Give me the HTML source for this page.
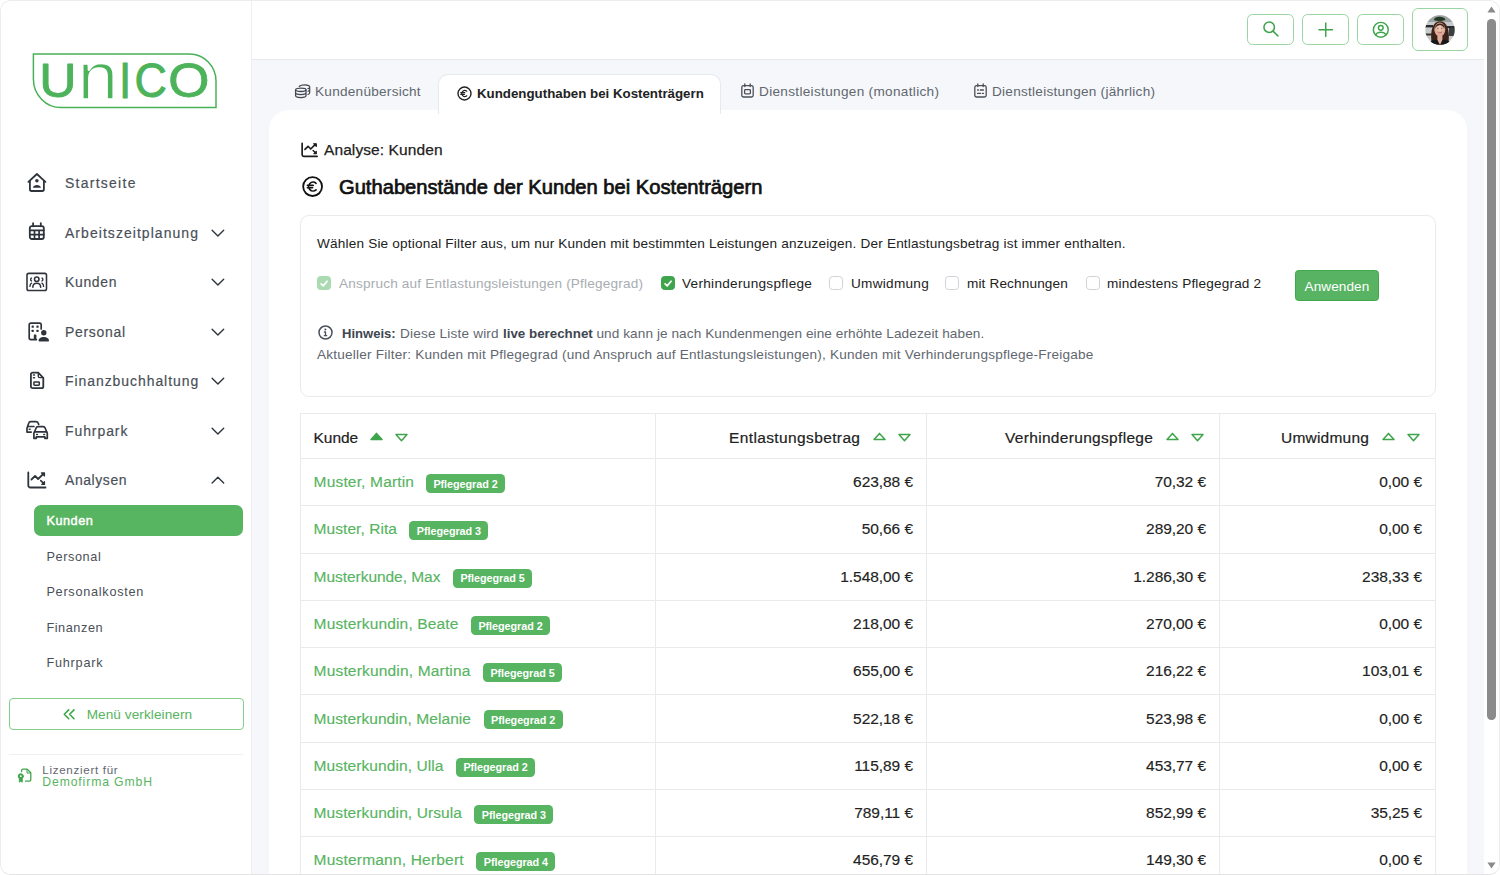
<!DOCTYPE html>
<html lang="de">
<head>
<meta charset="utf-8">
<title>UNICO – Guthabenstände der Kunden bei Kostenträgern</title>
<style>
*{box-sizing:border-box;margin:0;padding:0}
html,body{width:1500px;height:875px;overflow:hidden;background:#fff}
body{font-family:"Liberation Sans",sans-serif;color:#222;position:relative;-webkit-font-smoothing:antialiased}
#frame{position:absolute;left:0;top:0;width:1500px;height:875px;border-radius:10px;overflow:hidden;background:#f5f7fa}
#frameb{position:absolute;left:0;top:0;width:1500px;height:875px;border:1px solid #ececec;border-bottom:1.500px solid #e3e3e3;border-radius:10px;pointer-events:none;z-index:50}
.abs{position:absolute}
svg{display:block;overflow:visible}
/* ---------- sidebar ---------- */
#side{position:absolute;left:0;top:0;width:252.400px;height:875px;background:#fff;border-right:1.400px solid #edeff2}
.mi{position:absolute;left:65px;font-size:15.500px;letter-spacing:1px;color:#4a4f57;line-height:20px;white-space:nowrap;transform:scaleX(.9);transform-origin:0 50%}
.mic{position:absolute;left:27px}
.chev{position:absolute;left:210px}
.sub{position:absolute;left:46.400px;font-size:12.700px;letter-spacing:.8px;color:#4a4f57;line-height:18px;white-space:nowrap}
#act{position:absolute;left:34px;top:505px;width:209px;height:30.5px;background:#57b461;border-radius:7px}
#shrink{position:absolute;left:9px;top:698px;width:234.500px;height:31.500px;border:1px solid #84ce8e;border-radius:4px;background:#fff}
#shrink span{position:absolute;left:76.700px;top:6.800px;font-size:13.600px;line-height:18px;color:#57b461;letter-spacing:.35px;white-space:nowrap}
/* ---------- top bar ---------- */
#top{position:absolute;left:252px;top:0;width:1232px;height:60px;background:#fff;border-bottom:1px solid #e6e9ee}
.tb{position:absolute;top:14px;width:47px;height:31px;border:1.300px solid #9ad6a3;border-radius:5.500px;background:#fff}
/* ---------- scrollbar ---------- */
#sb{position:absolute;left:1484px;top:0;width:16px;height:875px;background:#fff}
/* ---------- tabs ---------- */
.tab{position:absolute;top:83px;font-size:13.600px;line-height:18px;color:#62676f;white-space:nowrap;letter-spacing:.1px}
#tabact{position:absolute;left:438.300px;top:74px;width:283.200px;height:40px;background:#fff;border:1px solid #e6e9ee;border-bottom:none;border-radius:10px 10px 0 0}
/* ---------- card ---------- */
#card{position:absolute;left:269px;top:110px;width:1198px;height:800px;background:#fff;border-radius:20px 20px 0 0}
#fbox{position:absolute;left:300px;top:215px;width:1136px;height:182px;border:1px solid #e8eaee;border-radius:9px;background:#fff}
.t14{position:absolute;font-size:13.600px;line-height:18px;white-space:nowrap;color:#222}
.cb{position:absolute;top:276px;width:14px;height:14px;border:1px solid #cfd3d8;border-radius:3.5px;background:#fff}
.cb.on{background:#3fa54c;border-color:#3fa54c}
.cb.dis{background:#a9dab0;border-color:#a9dab0}
#apply{position:absolute;left:1295px;top:270px;width:84px;height:31px;background:#58b463;border:1px solid #3fa84c;border-radius:3.500px;color:#fff;font-size:13.600px;line-height:29px;text-align:center;letter-spacing:.2px;padding-top:1px}
/* ---------- table ---------- */
#tbl{position:absolute;left:299.600px;top:413px;width:1136.900px;height:470px;border:1px solid #e8eaee;border-bottom:none;background:#fff}
.vl{position:absolute;top:413px;width:1px;height:470px;background:#e8eaee}
.hl{position:absolute;left:300px;width:1136px;height:1px;background:#e8eaee}
.th{position:absolute;top:428.300px;font-size:15.500px;line-height:20px;color:#222;white-space:nowrap}
.nm{position:absolute;left:313.600px;font-size:15.500px;line-height:20px;color:#57b461;white-space:nowrap}
.bd{position:absolute;height:19px;background:#57b461;border-radius:4.500px;color:#fff;font-weight:bold;font-size:10.800px;line-height:19px;padding:.800px 0 0 0;white-space:nowrap;letter-spacing:-.05px;width:79px;text-align:center}
.num{position:absolute;letter-spacing:-.05px;font-size:15.500px;line-height:20px;color:#222;white-space:nowrap;text-align:right;width:200px}
/*CAL*/
#m1{letter-spacing:1.415px!important}
#m2{letter-spacing:1.184px!important}
#m3{letter-spacing:0.754px!important}
#m4{letter-spacing:0.783px!important}
#m5{letter-spacing:1.063px!important}
#m6{letter-spacing:1.043px!important}
#m7{letter-spacing:0.653px!important}
#s1{letter-spacing:0.530px!important}
#s2{letter-spacing:0.617px!important}
#s3{letter-spacing:0.733px!important}
#s4{letter-spacing:0.571px!important}
#s5{letter-spacing:0.774px!important}
#shr{letter-spacing:0.075px!important}
#lic1{letter-spacing:0.694px!important}
#lic2{letter-spacing:0.884px!important}
#tab1{letter-spacing:0.255px!important}
#tab2{transform:scaleX(0.9782)}
#tab3{letter-spacing:0.314px!important}
#tab4{letter-spacing:0.254px!important}
#an{letter-spacing:0.093px!important}
#h1{transform:scaleX(1.0073)}
#f1{letter-spacing:0.182px!important}
#h2b{letter-spacing:0.182px!important}
#c1{letter-spacing:0.185px!important}
#c2{letter-spacing:0.288px!important}
#c3{letter-spacing:0.269px!important}
#c4{letter-spacing:0.138px!important}
#c5{letter-spacing:0.169px!important}
#apply{letter-spacing:0.064px!important}
#hb1{transform:scaleX(0.9587);margin-right:-2.31px}
#hb2{transform:scaleX(0.9823);margin-right:-1.62px}
#h2c{letter-spacing:0.080px!important}
#h3{letter-spacing:0.210px!important}
#n1{letter-spacing:0.169px!important}
#n2{letter-spacing:0.063px!important}
#n3{letter-spacing:-0.047px!important}
#n4{letter-spacing:0.146px!important}
#n5{letter-spacing:0.173px!important}
#n6{letter-spacing:0.072px!important}
#n7{letter-spacing:0.085px!important}
#n8{letter-spacing:0.102px!important}
#n9{letter-spacing:0.197px!important}
#th1{letter-spacing:-0.082px!important}
#th2{letter-spacing:0.378px!important}
#th3{letter-spacing:0.316px!important}
#th4{letter-spacing:0.220px!important}
/*ENDCAL*/
#hb1,#hb2{color:#40464f;display:inline-block;transform-origin:0 50%}
#an{-webkit-text-stroke:.25px #222}
.mi{-webkit-text-stroke:.2px #4a4f57}
.th{-webkit-text-stroke:.2px #222}
.num{-webkit-text-stroke:.15px #222}
.nm{-webkit-text-stroke:.15px #57b461}
</style>
</head>
<body>
<div id="frame">

<!-- SIDEBAR -->
<div id="side">
<!-- logo -->
<svg class="abs" style="left:0;top:0" width="251" height="130" viewBox="0 0 251 130">
  <path d="M33.400 54 H189.500 A26.500 27 0 0 1 216 81 V107.600 H61 A27.600 28.500 0 0 1 33.400 79 Z" fill="none" stroke="#48b055" stroke-width="1.500"/>
  <g fill="#4db35a" stroke="#4db35a" stroke-width=".9" stroke-linejoin="round" font-family="'Liberation Sans',sans-serif">
    <text transform="translate(39.27 97.21) scale(1.0625 1)" font-size="48.57">U</text>
    <text transform="translate(77.38 98.60) scale(1.1026 1)" font-size="66.30" stroke="#fff" stroke-width="1.71">n</text>
    <text transform="translate(119.04 97.70) scale(0.8929 1)" font-size="49.28">I</text>
    <text transform="translate(134.45 97.22) scale(0.9380 1)" font-size="47.89">C</text>
    <text transform="translate(168.35 97.22) scale(1.1055 1)" font-size="47.89">O</text>
  </g>
</svg>

<!-- menu icons -->
<svg class="mic" style="top:172px;left:27px" width="20" height="21" viewBox="0 0 20 21" fill="none" stroke="#2e343c" stroke-width="1.800" stroke-linecap="round" stroke-linejoin="round">
  <path d="M1.400 9.900 L9.900 2 L18.400 9.900"/><path d="M2.900 8.800 V17.300 a1.700 1.700 0 0 0 1.700 1.700 H15.200 a1.700 1.700 0 0 0 1.700 -1.700 V8.800"/>
  <circle cx="9.900" cy="8.700" r="1.750" fill="#2e343c" stroke="none"/><path d="M5.900 15.700 c.400 -3.500 7.600 -3.500 8 0 z" fill="#2e343c" stroke="none"/>
</svg>
<svg class="mic" style="top:222px;left:28px" width="18" height="19" viewBox="0 0 18 19" fill="none" stroke="#2e343c" stroke-width="1.800" stroke-linecap="round" stroke-linejoin="round">
  <rect x="1.800" y="4.100" width="14" height="12.900" rx="2"/><path d="M5.100 1.200 V4.300 M12.800 1.200 V4.300"/><path d="M1.800 8.300 H15.800 M1.800 12.700 H15.800 M6.500 8.300 V17 M11.100 8.300 V17" stroke-width="1.700"/>
</svg>
<svg class="mic" style="top:271.500px;left:26px" width="21.500" height="19.500" viewBox="0 0 22 20" fill="none" stroke="#2e343c" stroke-width="1.6" stroke-linecap="round" stroke-linejoin="round">
  <rect x="1" y="1.4" width="20" height="17.600" rx="1.8"/>
  <circle cx="11" cy="7.400" r="2.300"/><path d="M7 15.600 c0-5.400 8-5.400 8 0"/>
  <path d="M5.600 6.200 a1.700 1.700 0 0 0 0 3 M4 14.800 c0-1.700 .6-2.800 1.700-3.300 M16.400 6.200 a1.700 1.700 0 0 1 0 3 M18 14.800 c0-1.700 -.6-2.800 -1.700-3.300" stroke-width="1.400"/>
</svg>
<svg class="mic" style="top:321.500px;left:27.500px" width="22" height="20" viewBox="0 0 22 20" fill="none" stroke="#2e343c" stroke-width="1.7" stroke-linecap="round" stroke-linejoin="round">
  <path d="M8.400 17.600 H2.800 A1.600 1.600 0 0 1 1.200 16 V2.800 A1.600 1.600 0 0 1 2.800 1.200 H11.600 A1.600 1.600 0 0 1 13.200 2.800 V7"/>
  <g fill="#2e343c" stroke="none"><rect x="3.600" y="3.600" width="2.200" height="2.200" rx=".4"/><rect x="8.400" y="3.600" width="2.200" height="2.200" rx=".4"/><rect x="3.600" y="7.800" width="2.200" height="2.200" rx=".4"/><rect x="8.400" y="7.800" width="2.200" height="2.200" rx=".4"/><rect x="5.800" y="12.600" width="2.600" height="5" rx=".4"/>
  <circle cx="15.800" cy="10.800" r="2.700"/><path d="M10.600 18.800 c0-5 10.400-5 10.400 0 a.8 .8 0 0 1 -.8 .8 h-8.800 a.8 .8 0 0 1 -.8 -.8z"/></g>
</svg>
<svg class="mic" style="top:371px;left:29px" width="17" height="20" viewBox="0 0 17 20" fill="none" stroke="#2e343c" stroke-width="1.800" stroke-linecap="round" stroke-linejoin="round">
  <path d="M3.700 1.700 H9.200 L14.300 6.800 V15.400 a1.800 1.800 0 0 1 -1.800 1.800 H3.700 a1.800 1.800 0 0 1 -1.800 -1.800 V3.500 a1.800 1.800 0 0 1 1.800 -1.800 Z"/>
  <path d="M9.300 2.200 V5.300 a1.300 1.300 0 0 0 1.300 1.300 H13.800" stroke-width="1.400"/>
  <path d="M4.500 4.100 h1 M4.500 6.700 h1" stroke-width="1.500"/><rect x="4.900" y="10.900" width="5.400" height="3.300" rx=".7" stroke-width="1.500"/>
</svg>
<svg class="mic" style="top:420px;left:25px" width="24" height="21" viewBox="0 0 24 21" fill="none" stroke="#2e343c" stroke-width="1.700" stroke-linecap="round" stroke-linejoin="round">
  <path d="M2 12.100 V8.200 L3.600 3.400 A2.400 2.400 0 0 1 5.900 1.700 H11 A2.400 2.400 0 0 1 13.200 3.200 L13.700 4.400 M2 12.100 H6.200"/><path d="M3 6.400 H9" stroke-width="1.500"/><path d="M4.300 9.300 h.8" stroke-width="1.600"/>
  <path d="M9.600 11.800 L11.200 7.800 A1.900 1.900 0 0 1 13 6.600 H18.200 A1.900 1.900 0 0 1 20 7.800 L21.600 11.800"/>
  <path d="M10.300 11.800 H20.900 a1.400 1.400 0 0 1 1.400 1.400 V18.300 H19.900 V16.900 H11.300 V18.300 H8.900 V13.200 a1.400 1.400 0 0 1 1.400 -1.400 Z"/>
  <path d="M11.700 14.400 h.7 M18.800 14.400 h.7" stroke-width="1.500"/>
</svg>
<svg class="mic" style="top:470.700px;left:27px" width="20" height="18" viewBox="0 0 20 18" fill="none" stroke="#2e343c" stroke-width="1.800" stroke-linecap="round" stroke-linejoin="round">
  <path d="M1.300 1.500 V14.400 a2.100 2.100 0 0 0 2.100 2.100 H18.500"/><path d="M4.500 8.500 L8.100 4.900 L11.100 8 L16.400 2.800"/>
  <path d="M14.400 1.900 H17.500 V5 Z" fill="#2e343c" stroke-width="1.200"/><path d="M13.800 9.600 L16.600 12.400" stroke-width="1.600"/><path d="M17.500 10.700 V13.400 H14.800 Z" fill="#2e343c" stroke-width="1.200"/>
</svg>

<!-- menu labels -->
<div class="mi" id="m1" style="top:173.2px">Startseite</div>
<div class="mi" id="m2" style="top:222.7px">Arbeitszeitplanung</div>
<div class="mi" id="m3" style="top:272.2px">Kunden</div>
<div class="mi" id="m4" style="top:321.7px">Personal</div>
<div class="mi" id="m5" style="top:371.2px">Finanzbuchhaltung</div>
<div class="mi" id="m6" style="top:420.7px">Fuhrpark</div>
<div class="mi" id="m7" style="top:470.2px">Analysen</div>

<!-- chevrons -->
<svg class="chev" style="top:228.6px;left:210.600px" width="13.800" height="8.300" viewBox="0 0 15 9" fill="none" stroke="#2e343c" stroke-width="1.500" stroke-linecap="round" stroke-linejoin="round"><path d="M1.200 1.400 L7.500 7.600 L13.800 1.400"/></svg>
<svg class="chev" style="top:278.1px;left:210.600px" width="13.800" height="8.300" viewBox="0 0 15 9" fill="none" stroke="#2e343c" stroke-width="1.500" stroke-linecap="round" stroke-linejoin="round"><path d="M1.200 1.400 L7.500 7.600 L13.800 1.400"/></svg>
<svg class="chev" style="top:327.6px;left:210.600px" width="13.800" height="8.300" viewBox="0 0 15 9" fill="none" stroke="#2e343c" stroke-width="1.500" stroke-linecap="round" stroke-linejoin="round"><path d="M1.200 1.400 L7.500 7.600 L13.800 1.400"/></svg>
<svg class="chev" style="top:377.1px;left:210.600px" width="13.800" height="8.300" viewBox="0 0 15 9" fill="none" stroke="#2e343c" stroke-width="1.500" stroke-linecap="round" stroke-linejoin="round"><path d="M1.200 1.400 L7.500 7.600 L13.800 1.400"/></svg>
<svg class="chev" style="top:426.6px;left:210.600px" width="13.800" height="8.300" viewBox="0 0 15 9" fill="none" stroke="#2e343c" stroke-width="1.500" stroke-linecap="round" stroke-linejoin="round"><path d="M1.200 1.400 L7.500 7.600 L13.800 1.400"/></svg>
<svg class="chev" style="top:476.1px;left:210.600px" width="13.800" height="8.300" viewBox="0 0 15 9" fill="none" stroke="#2e343c" stroke-width="1.500" stroke-linecap="round" stroke-linejoin="round"><path d="M1.200 7.600 L7.500 1.400 L13.800 7.600"/></svg>

<!-- submenu -->
<div id="act"></div>
<div class="sub" id="s1" style="top:512px;color:#fff;-webkit-text-stroke:.45px #fff">Kunden</div>
<div class="sub" id="s2" style="top:547.6px">Personal</div>
<div class="sub" id="s3" style="top:583.1px">Personalkosten</div>
<div class="sub" id="s4" style="top:618.6px">Finanzen</div>
<div class="sub" id="s5" style="top:654.1px">Fuhrpark</div>

<!-- shrink button -->
<div id="shrink">
  <svg class="abs" style="left:53px;top:10px" width="12.500" height="10.600" viewBox="0 0 14 12" fill="none" stroke="#3aa648" stroke-width="1.800" stroke-linecap="round" stroke-linejoin="round"><path d="M6.400 1 L1.400 6 L6.400 11 M12.400 1 L7.400 6 L12.400 11"/></svg>
  <span id="shr">Menü verkleinern</span>
</div>

<div class="abs" style="left:9px;top:754px;width:234px;height:1px;background:#eef0f3"></div>
<svg class="abs" style="left:17px;top:767.500px" width="15" height="15" viewBox="0 0 15 15" fill="none" stroke="#3fa54c" stroke-width="1.300" stroke-linecap="round" stroke-linejoin="round">
  <path d="M4.600 3.600 V2.600 a1.400 1.400 0 0 1 1.400 -1.400 H10.200 L13.800 4.800 V11.800 a1.400 1.400 0 0 1 -1.400 1.400 H8.600"/><path d="M10 1.400 V5 H13.600" stroke-width="1"/>
  <circle cx="3.800" cy="8.200" r="2.500" fill="#3fa54c" stroke-width="1"/><circle cx="3.800" cy="8.200" r=".9" fill="#fff" stroke="none"/>
  <path d="M2.300 10.400 V14.200 L3.800 13.200 L5.300 14.200 V10.400 Z" fill="#3fa54c" stroke-width=".8"/>
</svg>
<div class="abs" style="left:42.300px;top:762.700px;font-size:11.600px;line-height:14px;color:#62676f;letter-spacing:.9px;white-space:nowrap" id="lic1">Lizenziert für</div>
<div class="abs" style="left:42.300px;top:774.300px;font-size:12.200px;line-height:16px;color:#57b461;letter-spacing:1px;white-space:nowrap" id="lic2">Demofirma GmbH</div>
</div>

<!-- TOP BAR -->
<div id="top">
  <div class="tb" style="left:995.400px">
    <svg class="abs" style="left:13.200px;top:5.300px" width="17.500" height="17.500" viewBox="0 0 18 18" fill="none" stroke="#3fa54c" stroke-width="1.600" stroke-linecap="round"><circle cx="7.400" cy="7.400" r="5.400"/><path d="M11.400 11.400 L16.400 16.400"/></svg>
  </div>
  <div class="tb" style="left:1050.400px">
    <svg class="abs" style="left:14.900px;top:6.900px" width="15.500" height="15.500" viewBox="0 0 16 16" fill="none" stroke="#3fa54c" stroke-width="1.500" stroke-linecap="round"><path d="M8 1 V15 M1 8 H15"/></svg>
  </div>
  <div class="tb" style="left:1105.300px">
    <svg class="abs" style="left:13.800px;top:5.800px" width="17.600" height="17.600" viewBox="0 0 18 18" fill="none" stroke="#3fa54c" stroke-width="1.500" stroke-linecap="round"><circle cx="9" cy="9" r="7.600"/><circle cx="9" cy="7" r="2.400"/><path d="M4 14.600 c.6-4 9.400-4 10 0"/></svg>
  </div>
  <div class="tb" style="left:1160px;top:8px;width:56px;height:43px;border-radius:6px">
    <svg class="abs" style="left:12.200px;top:5.600px" width="30" height="30" viewBox="0 0 30 30">
      <defs><clipPath id="avc"><circle cx="15" cy="15" r="14.700"/></clipPath>
      <radialGradient id="avf" cx=".5" cy=".4" r=".65"><stop offset="0" stop-color="#f0c9b8"/><stop offset="1" stop-color="#d49c88"/></radialGradient></defs>
      <g clip-path="url(#avc)">
        <rect width="30" height="30" fill="#c6cacb"/>
        <rect x="0" y="0" width="30" height="7" fill="#9da3a3"/>
        <rect x="0" y="10" width="8" height="2.400" fill="#2a2a2a"/><rect x="0" y="18.500" width="7" height="2" fill="#3a3a3a"/>
        <rect x="22" y="11" width="8" height="2.200" fill="#2d2d2d"/><rect x="24" y="13" width="6" height="8" fill="#3c3f40"/>
        <path d="M9 5 C9 1 19 .5 20.500 4.500 C18 6.500 11.500 6.500 9 5Z" fill="#243a22"/>
        <path d="M6.500 27 C5 15 8 6.200 15 6.200 C22 6.200 25 15 23.500 27 L21 30 H9 Z" fill="#3d2219"/>
        <ellipse cx="14.800" cy="14.600" rx="5.500" ry="7" fill="url(#avf)"/>
        <path d="M9.800 13.500 C10.500 9.500 13 8.400 15 8.400 C17.500 8.400 19.500 10 19.800 13.500 C18 11.500 16.500 10.200 14.800 10 C12.800 10.300 11 11.500 9.800 13.500Z" fill="#3d2219"/>
        <path d="M12.400 20.500 h5 v9 h-5z" fill="#dfae9b"/>
        <path d="M3 30 C5 25 9.500 24 12.400 25 L15 30 Z M27 30 C25 25 20.500 24 17.400 25 L15 30 Z" fill="#17171a"/>
        <path d="M12.800 17 q2.100 1.700 4.200 0" stroke="#b5545a" stroke-width=".9" fill="#f6e6e0"/>
        <circle cx="12.900" cy="13.300" r=".55" fill="#3a2a25"/><circle cx="16.800" cy="13.300" r=".55" fill="#3a2a25"/>
      </g>
    </svg>
  </div>
</div>

<!-- SCROLLBAR -->
<div id="sb">
  <svg class="abs" style="left:3px;top:5.600px" width="9" height="7" viewBox="0 0 9 7"><path d="M4.500 .6 L8.600 6.400 H.4 Z" fill="#8a8a8a"/></svg>
  <div class="abs" style="left:3.400px;top:18.800px;width:8.300px;height:701.500px;border-radius:4.200px;background:#8b8b8b"></div>
  <svg class="abs" style="left:3px;top:862px" width="9" height="7" viewBox="0 0 9 7"><path d="M4.500 6.400 L8.600 .6 H.4 Z" fill="#8a8a8a"/></svg>
</div>

<!-- TABS + CARD -->
<div id="card"></div>
<div id="tabact"></div>
<!-- tab icons -->
<svg class="abs" style="left:294px;top:83px" width="17" height="17" viewBox="0 0 17 17" fill="none" stroke="#42474e" stroke-width="1.300" stroke-linecap="round" stroke-linejoin="round">
  <ellipse cx="6.800" cy="6.800" rx="5.200" ry="1.700"/><path d="M1.600 6.800 V12.800 M12 6.800 V12.800 M1.600 9.800 c0 2.300 10.400 2.300 10.400 0 M1.600 12.800 c0 2.300 10.400 2.300 10.400 0"/>
  <path transform="translate(0 .8)" d="M5.300 2.500 C6.500 1.400 8.500 1 10.500 1 C13.400 1 15.700 1.900 15.700 3.200 V8.600 C15.700 9.600 15 10.300 14 10.700 M15.700 3.400 C15.700 4.100 14.900 4.500 14 4.800 M15.700 6 c0 .700 -.800 1.100 -1.700 1.400" stroke-width="1.200"/>
</svg>
<div class="tab" id="tab1" style="left:315px">Kundenübersicht</div>
<svg class="abs" style="left:457px;top:86px" width="15" height="15" viewBox="0 0 15 15" fill="none" stroke="#222" stroke-width="1.400" stroke-linecap="round"><circle cx="7.500" cy="7.500" r="6.500"/><path d="M9.800 5.200 a3 3 0 1 0 0 4.600 M3.800 6.700 H7.800 M3.800 8.400 H7.400" stroke-width="1.200"/></svg>
<div class="tab" id="tab2" style="left:477px;top:85px;transform-origin:0 50%;color:#222;font-weight:bold;letter-spacing:0">Kundenguthaben bei Kostenträgern</div>
<svg class="abs" style="left:741px;top:83px" width="13" height="15" viewBox="0 0 13 15" fill="none" stroke="#4a4f57" stroke-width="1.300" stroke-linecap="round" stroke-linejoin="round"><rect x=".8" y="2.600" width="11.400" height="11.400" rx="1.800"/><path d="M3.800 .8 V3.600 M9.200 .8 V3.600"/><rect x="3.600" y="6.600" width="5.800" height="4.200" rx=".8"/></svg>
<div class="tab" id="tab3" style="left:759px">Dienstleistungen (monatlich)</div>
<svg class="abs" style="left:974px;top:83px" width="13" height="15" viewBox="0 0 13 15" fill="none" stroke="#4a4f57" stroke-width="1.300" stroke-linecap="round" stroke-linejoin="round"><rect x=".8" y="2.600" width="11.400" height="11.400" rx="1.800"/><path d="M3.800 .8 V3.600 M9.200 .8 V3.600"/><path d="M3.600 7 H4.400 M6.400 7 H9.400 M3.600 10.400 H6.600 M8.600 10.400 H9.400" stroke-width="1.400"/></svg>
<div class="tab" id="tab4" style="left:992px">Dienstleistungen (jährlich)</div>

<!-- headings -->
<svg class="abs" style="left:301px;top:141.500px" width="17.500" height="15.750" viewBox="0 0 20 18" fill="none" stroke="#1c1c1c" stroke-width="1.900" stroke-linecap="round" stroke-linejoin="round">
  <path d="M1.300 1.500 V14.400 a2.100 2.100 0 0 0 2.100 2.100 H18.500"/><path d="M4.500 8.500 L8.100 4.900 L11.100 8 L16.400 2.800"/>
  <path d="M14.400 1.900 H17.500 V5 Z" fill="#1c1c1c" stroke-width="1.200"/><path d="M13.800 9.600 L16.600 12.400" stroke-width="1.600"/><path d="M17.500 10.700 V13.400 H14.800 Z" fill="#1c1c1c" stroke-width="1.200"/>
</svg>
<div class="abs" style="left:324px;top:140.100px;font-size:15.500px;line-height:20px;color:#222;white-space:nowrap" id="an">Analyse: Kunden</div>
<svg class="abs" style="left:302.200px;top:175.800px" width="21.200" height="21.200" viewBox="0 0 22 22" fill="none" stroke="#111" stroke-width="1.900" stroke-linecap="round"><circle cx="11" cy="11" r="9.800"/><path d="M14.600 7.600 a4.600 4.600 0 1 0 0 6.800 M5.600 9.800 H11.600 M5.600 12.200 H11" stroke-width="1.700"/></svg>
<div class="abs" id="h1" style="left:339px;top:174.600px;transform-origin:0 50%;font-size:20px;line-height:24px;color:#111;-webkit-text-stroke:.7px #111;white-space:nowrap">Guthabenstände der Kunden bei Kostenträgern</div>

<!-- FILTER BOX -->
<div id="fbox"></div>
<div class="t14" id="f1" style="left:317px;top:234.6px">Wählen Sie optional Filter aus, um nur Kunden mit bestimmten Leistungen anzuzeigen. Der Entlastungsbetrag ist immer enthalten.</div>
<div class="cb dis" style="left:317px"><svg class="abs" style="left:2px;top:2.500px" width="8.200" height="7.300" viewBox="0 0 9 8" fill="none" stroke="#fff" stroke-width="1.900" stroke-linecap="round" stroke-linejoin="round"><path d="M1.200 4.200 L3.500 6.400 L7.800 1.400"/></svg></div>
<div class="t14" id="c1" style="left:339px;top:274.6px;color:#a9adb2">Anspruch auf Entlastungsleistungen (Pflegegrad)</div>
<div class="cb on" style="left:661px"><svg class="abs" style="left:2px;top:2.500px" width="8.200" height="7.300" viewBox="0 0 9 8" fill="none" stroke="#fff" stroke-width="1.900" stroke-linecap="round" stroke-linejoin="round"><path d="M1.200 4.200 L3.500 6.400 L7.800 1.400"/></svg></div>
<div class="t14" id="c2" style="left:682px;top:274.6px">Verhinderungspflege</div>
<div class="cb" style="left:829px"></div>
<div class="t14" id="c3" style="left:851px;top:274.6px">Umwidmung</div>
<div class="cb" style="left:945px"></div>
<div class="t14" id="c4" style="left:967px;top:274.6px">mit Rechnungen</div>
<div class="cb" style="left:1086px"></div>
<div class="t14" id="c5" style="left:1107px;top:274.6px">mindestens Pflegegrad 2</div>
<div id="apply">Anwenden</div>
<svg class="abs" style="left:318.400px;top:325.400px" width="15" height="15" viewBox="0 0 15 15" fill="none" stroke="#4a515a" stroke-width="1.500" stroke-linecap="round"><circle cx="7.500" cy="7.500" r="6.500"/><path d="M7.500 7 V10.600 M6.400 7 H7.500 M6.300 10.700 H8.700" stroke-width="1.300"/><circle cx="7.400" cy="4.600" r="1" fill="#4a515a" stroke="none"/></svg>
<div class="t14" id="h2" style="left:342.400px;top:324.6px;color:#62676f"><b id="hb1">Hinweis:</b><span id="h2b"> Diese Liste wird </span><b id="hb2">live berechnet</b><span id="h2c"> und kann je nach Kundenmengen eine erhöhte Ladezeit haben.</span></div>
<div class="t14" id="h3" style="left:317px;top:345.6px;color:#62676f">Aktueller Filter: Kunden mit Pflegegrad (und Anspruch auf Entlastungsleistungen), Kunden mit Verhinderungspflege-Freigabe</div>

<!-- TABLE -->
<div id="tbl"></div>
<div class="vl" style="left:655px"></div><div class="vl" style="left:926px"></div><div class="vl" style="left:1219px"></div>
<div class="hl" style="top:458.0px"></div><div class="hl" style="top:505.3px"></div><div class="hl" style="top:552.5px"></div><div class="hl" style="top:599.8px"></div><div class="hl" style="top:647.0px"></div><div class="hl" style="top:694.3px"></div><div class="hl" style="top:741.6px"></div><div class="hl" style="top:788.8px"></div><div class="hl" style="top:836.1px"></div><div class="hl" style="top:883.3px"></div>
<div class="th" id="th1" style="left:313.600px">Kunde</div><svg class="abs" style="left:369.6px;top:432px" width="13" height="9" viewBox="0 0 13 9" fill="#3fa54c" stroke="#3fa54c" stroke-width="1.500" stroke-linejoin="round"><path d="M6.500 1.400 L12 7.600 H1 Z"/></svg><svg class="abs" style="left:394.6px;top:433px" width="13" height="9" viewBox="0 0 13 9" fill="none" stroke="#3fa54c" stroke-width="1.500" stroke-linejoin="round"><path d="M6.500 7.800 L12 1.600 H1 Z"/></svg><div class="th" id="th2" style="left:729px">Entlastungsbetrag</div><svg class="abs" style="left:872.6px;top:432px" width="13" height="9" viewBox="0 0 13 9" fill="none" stroke="#3fa54c" stroke-width="1.500" stroke-linejoin="round"><path d="M6.500 1.400 L12 7.600 H1 Z"/></svg><svg class="abs" style="left:897.6px;top:433px" width="13" height="9" viewBox="0 0 13 9" fill="none" stroke="#3fa54c" stroke-width="1.500" stroke-linejoin="round"><path d="M6.500 7.800 L12 1.600 H1 Z"/></svg><div class="th" id="th3" style="left:1005px">Verhinderungspflege</div><svg class="abs" style="left:1165.6px;top:432px" width="13" height="9" viewBox="0 0 13 9" fill="none" stroke="#3fa54c" stroke-width="1.500" stroke-linejoin="round"><path d="M6.500 1.400 L12 7.600 H1 Z"/></svg><svg class="abs" style="left:1190.6px;top:433px" width="13" height="9" viewBox="0 0 13 9" fill="none" stroke="#3fa54c" stroke-width="1.500" stroke-linejoin="round"><path d="M6.500 7.800 L12 1.600 H1 Z"/></svg><div class="th" id="th4" style="left:1281px">Umwidmung</div><svg class="abs" style="left:1382px;top:432px" width="13" height="9" viewBox="0 0 13 9" fill="none" stroke="#3fa54c" stroke-width="1.500" stroke-linejoin="round"><path d="M6.500 1.400 L12 7.600 H1 Z"/></svg><svg class="abs" style="left:1407px;top:433px" width="13" height="9" viewBox="0 0 13 9" fill="none" stroke="#3fa54c" stroke-width="1.500" stroke-linejoin="round"><path d="M6.500 7.800 L12 1.600 H1 Z"/></svg>
<div class="nm" id="n1" style="top:472.1px">Muster, Martin</div><div class="bd" style="left:426px;top:474.0px">Pflegegrad 2</div><div class="num" style="left:713px;top:472.1px">623,88 €</div><div class="num" style="left:1006px;top:472.1px">70,32 €</div><div class="num" style="left:1222px;top:472.1px">0,00 €</div>
<div class="nm" id="n2" style="top:519.4px">Muster, Rita</div><div class="bd" style="left:409.4px;top:521.3px">Pflegegrad 3</div><div class="num" style="left:713px;top:519.4px">50,66 €</div><div class="num" style="left:1006px;top:519.4px">289,20 €</div><div class="num" style="left:1222px;top:519.4px">0,00 €</div>
<div class="nm" id="n3" style="top:566.6px">Musterkunde, Max</div><div class="bd" style="left:453px;top:568.5px">Pflegegrad 5</div><div class="num" style="left:713px;top:566.6px">1.548,00 €</div><div class="num" style="left:1006px;top:566.6px">1.286,30 €</div><div class="num" style="left:1222px;top:566.6px">238,33 €</div>
<div class="nm" id="n4" style="top:613.9px">Musterkundin, Beate</div><div class="bd" style="left:471px;top:615.8px">Pflegegrad 2</div><div class="num" style="left:713px;top:613.9px">218,00 €</div><div class="num" style="left:1006px;top:613.9px">270,00 €</div><div class="num" style="left:1222px;top:613.9px">0,00 €</div>
<div class="nm" id="n5" style="top:661.2px">Musterkundin, Martina</div><div class="bd" style="left:483px;top:663.1px">Pflegegrad 5</div><div class="num" style="left:713px;top:661.2px">655,00 €</div><div class="num" style="left:1006px;top:661.2px">216,22 €</div><div class="num" style="left:1222px;top:661.2px">103,01 €</div>
<div class="nm" id="n6" style="top:708.5px">Musterkundin, Melanie</div><div class="bd" style="left:483.6px;top:710.4px">Pflegegrad 2</div><div class="num" style="left:713px;top:708.5px">522,18 €</div><div class="num" style="left:1006px;top:708.5px">523,98 €</div><div class="num" style="left:1222px;top:708.5px">0,00 €</div>
<div class="nm" id="n7" style="top:755.7px">Musterkundin, Ulla</div><div class="bd" style="left:456px;top:757.6px">Pflegegrad 2</div><div class="num" style="left:713px;top:755.7px">115,89 €</div><div class="num" style="left:1006px;top:755.7px">453,77 €</div><div class="num" style="left:1222px;top:755.7px">0,00 €</div>
<div class="nm" id="n8" style="top:803.0px">Musterkundin, Ursula</div><div class="bd" style="left:474.4px;top:804.9px">Pflegegrad 3</div><div class="num" style="left:713px;top:803.0px">789,11 €</div><div class="num" style="left:1006px;top:803.0px">852,99 €</div><div class="num" style="left:1222px;top:803.0px">35,25 €</div>
<div class="nm" id="n9" style="top:850.3px">Mustermann, Herbert</div><div class="bd" style="left:476.4px;top:852.2px">Pflegegrad 4</div><div class="num" style="left:713px;top:850.3px">456,79 €</div><div class="num" style="left:1006px;top:850.3px">149,30 €</div><div class="num" style="left:1222px;top:850.3px">0,00 €</div>

<div id="frameb"></div>
</div>
</body>
</html>
